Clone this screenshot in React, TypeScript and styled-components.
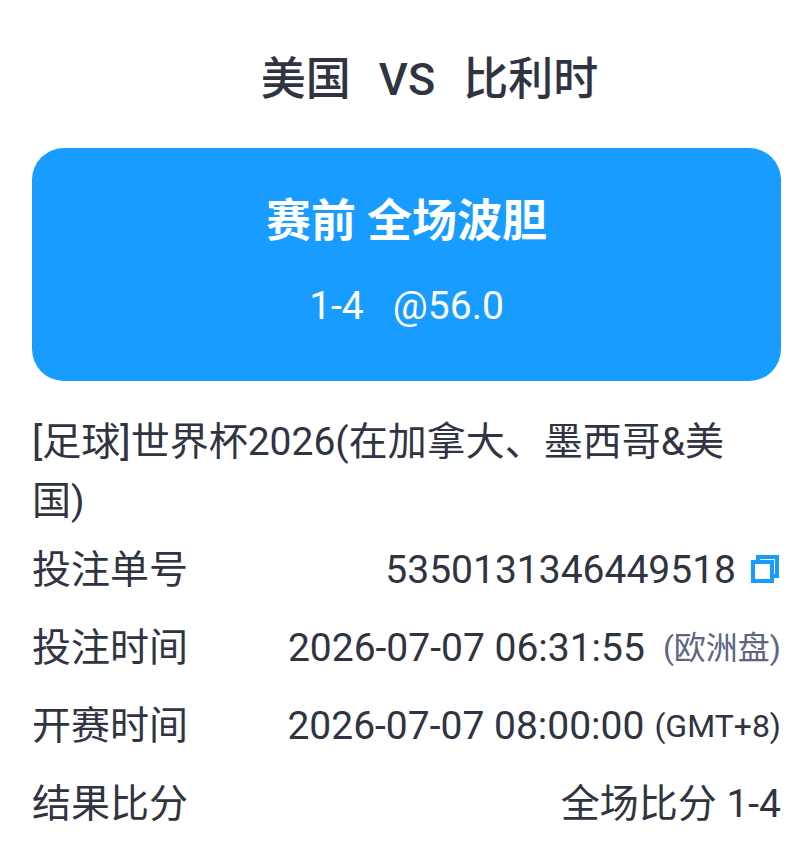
import React from "react";
import styled, { createGlobalStyle } from "styled-components";

const GlobalStyle = createGlobalStyle`
  * { box-sizing: border-box; }
  body {
    margin: 0;
    background: #ffffff;
    color: #303442;
    font-family: Roboto, "Noto Sans CJK SC", sans-serif;
  }
`;

const Page = styled.main`
  padding: 48px 29px 0 32px;
`;

const Matchup = styled.h1`
  display: flex;
  justify-content: center;
  gap: 28px;
  margin: 0;
  padding-left: 46px;
  font-size: 45px;
  line-height: 64px;
  font-weight: 500;
`;

const BetCard = styled.section`
  margin-top: 36px;
  padding: 42px 24px 45px;
  border-radius: 32px;
  background: #189cff;
  color: #ffffff;
  text-align: center;
`;

const Market = styled.h2`
  margin: 0;
  font-size: 45px;
  line-height: 64px;
  font-weight: 700;
`;

const Pick = styled.p`
  display: flex;
  justify-content: center;
  gap: 29px;
  margin: 22px 0 0;
  font-size: 39px;
  line-height: 60px;
`;

const League = styled.p`
  margin: 32px 0 0;
  padding-right: 32px;
  font-size: 39px;
  line-height: 59px;
`;

const Details = styled.dl`
  margin: 0;
`;

const Row = styled.div`
  display: flex;
  justify-content: space-between;
  align-items: center;
  min-height: 78px;
  font-size: 39px;
  line-height: 60px;
`;

const Label = styled.dt``;

const Value = styled.dd<{ $gap?: number }>`
  display: flex;
  align-items: center;
  gap: ${(p) => p.$gap ?? 0}px;
  margin: 0;
`;

const Zone = styled.span<{ $muted?: boolean }>`
  font-size: 32px;
  color: ${(p) => (p.$muted ? "#5e6484" : "inherit")};
`;

const CopyButton = styled.button`
  display: flex;
  padding: 0;
  border: 0;
  background: none;
  cursor: pointer;
`;

const CopyIcon = () => (
  <svg width="30" height="30" viewBox="0 0 30 30" fill="none" stroke="#189cff" strokeWidth="4" aria-hidden="true">
    <path d="M2 7H21V26H2Z" />
    <path d="M7 7V2H26V21H21" />
  </svg>
);

export default function App() {
  return (
    <>
      <GlobalStyle />
      <Page>
        <Matchup>
          <span>美国</span>
          <span>VS</span>
          <span>比利时</span>
        </Matchup>
        <BetCard>
          <Market>赛前 全场波胆</Market>
          <Pick>
            <span>1-4</span>
            <span>@56.0</span>
          </Pick>
        </BetCard>
        <League>[足球]世界杯2026(在加拿大、墨西哥&amp;美国)</League>
        <Details>
          <Row>
            <Label>投注单号</Label>
            <Value $gap={15}>
              5350131346449518
              <CopyButton type="button" aria-label="复制投注单号">
                <CopyIcon />
              </CopyButton>
            </Value>
          </Row>
          <Row>
            <Label>投注时间</Label>
            <Value $gap={18}>
              2026-07-07 06:31:55
              <Zone $muted>(欧洲盘)</Zone>
            </Value>
          </Row>
          <Row>
            <Label>开赛时间</Label>
            <Value $gap={10}>
              2026-07-07 08:00:00
              <Zone>(GMT+8)</Zone>
            </Value>
          </Row>
          <Row>
            <Label>结果比分</Label>
            <Value>全场比分 1-4</Value>
          </Row>
        </Details>
      </Page>
    </>
  );
}
